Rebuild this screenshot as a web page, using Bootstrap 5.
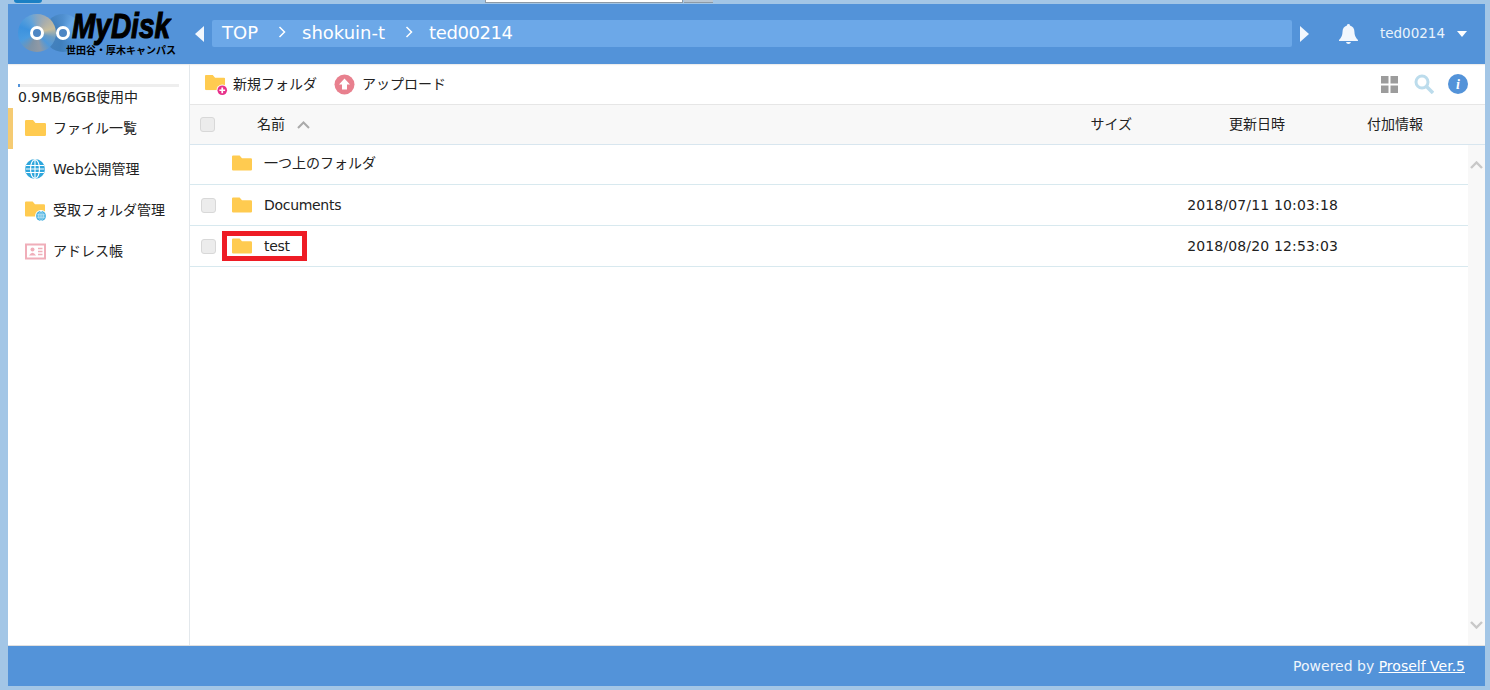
<!DOCTYPE html>
<html lang="ja">
<head>
<meta charset="utf-8">
<title>MyDisk</title>
<link href="https://cdn.jsdelivr.net/npm/bootstrap@5.3.0/dist/css/bootstrap.min.css" rel="stylesheet">
<style>
html,body{height:100%;overflow:hidden}
body{background:#a3c6e6;font-family:"DejaVu Sans","Noto Sans CJK JP",sans-serif;font-size:14px;color:#222;letter-spacing:0}
.strip{height:4px;position:relative;flex:none}
.strip i{display:block;position:absolute;top:0;height:3px}
.st-a{left:14px;width:28px;background:#1b80c4;border-radius:0 0 5px 5px}
.st-b{left:485px;width:198px;background:#fff;border:solid #8e9aa5;border-width:0 1px 1px}
.st-c{left:684px;width:29px;background:#b9c6d3;border-bottom:1px solid #8e9aa5}
.win{margin:0 5px 0 8px;height:682px;background:#fff}
.topbar{height:60px;background:#5393d9;padding:0;flex:none;flex-wrap:nowrap}
.logo-box{width:176px;height:60px;position:relative;flex:none}
.disc{position:absolute;top:10px;width:38px;height:38px;border-radius:50%}
.disc::after{content:"";position:absolute;left:12px;top:12px;width:14px;height:14px;border-radius:50%;background:#4d86c4;border:3px solid #fff}
.disc-b{left:36px;background:conic-gradient(#4f8fcf 0deg,#68a8e6 40deg,#5a9de0 90deg,#4c8fd4 130deg,#3f7fbc 190deg,#4682bd 240deg,#3f7db8 300deg,#4f8fcf 360deg)}
.disc-a{left:10px;background:conic-gradient(#86a6c2 0deg,#a8adad 35deg,#c6bd9e 75deg,#6b9cc4 105deg,#4f98da 135deg,#8f99a5 170deg,#7e93a6 205deg,#4a9be0 245deg,#3c92de 290deg,#62a3da 335deg,#86a6c2 360deg)}
.logo-main{position:absolute;left:64px;top:6px;font:italic 900 35px/32px "Liberation Sans",sans-serif;color:#000;-webkit-text-stroke:1.2px #000;white-space:nowrap;transform:scaleX(.8);transform-origin:left center}
.logo-sub{position:absolute;left:58px;top:39px;font:700 10px/14px "Noto Sans CJK JP",sans-serif;color:#000;white-space:nowrap}
.crumb-wrap{flex:1 1 auto;min-width:0;margin:0 0 1px 11px}
.crumbs{height:27px;background:#6ca8e8;border-radius:2px;color:#fff;font-size:18px;flex:none;padding:0 0 3px 10px;margin:0 8px;width:1080px}
.crumbs .sep{margin:0 16px 0 20px;width:8px;height:12px}
.crumb-end{letter-spacing:-.4px}
.user{color:#eaf3fc;font-size:13.5px}
.bell{margin:0 22px 0 30px}
.caret-d{width:0;height:0;border:5px solid transparent;border-top:6px solid #fff;border-bottom:0;margin:1px 18px 0 12px}
.mainarea{flex:1 1 auto;min-height:0}
.side{width:182px;flex:none;border-right:1px solid #e3e8ec;padding-top:20px;box-shadow:inset 0 2px 2px -2px #bbb}
.meter{height:3px;margin:0 10px;background:#eee;flex:none}
.meter b{display:block;height:3px;background:#5393d9}
.usage{margin:1px 10px 0;font-size:14px;line-height:18px;height:20px;white-space:nowrap}
.side-link{height:41px;padding:0 0 0 11px;color:#222;font-size:14px;gap:6px;border-left:5px solid transparent;border-radius:0;white-space:nowrap}
.side-link.on{border-left-color:#f5cb73}
.side-ico{width:23px;height:23px;flex:none}
.content{flex:1 1 auto;min-width:0}
.tools{height:41px;flex:none;padding:0 17px 0 15px;border-bottom:1px solid #e6e6e6;box-shadow:inset 0 2px 2px -2px #bbb}
.tool{color:#222;gap:5px;font-size:14px;padding:0;margin-right:17px;border:0}
.tool-ends{gap:14px}
.tool-grid{margin-right:2px}
.head{height:40px;background:#f8f8f8;border-bottom:1px solid #d8e6ef;flex:none}
.cb{width:15px;height:15px;background:#ececec;border:1px solid #d8d8d8;border-radius:3px;flex:none;margin:0}
.c-cb{width:42px;padding-left:11px;flex:none}
.c-name{flex:1 1 auto;min-width:0;gap:12px}
.c-date{width:205px;text-align:right;flex:none;letter-spacing:.15px}
.c-info{width:130px;flex:none}
.head .c-cb{width:67px;padding-left:10px}
.h-date{width:153px;text-align:right;margin-right:82px;flex:none}
.h-info{width:118px;flex:none}
.listwrap{flex:1 1 auto;min-height:0}
.rows{flex:1 1 auto;min-width:0}
.frow{height:41px;border-bottom:1px solid #d8e9ef;flex:none}
.frow:first-child{height:40px;padding-bottom:2px}
.fname{letter-spacing:-.3px}
.fold{margin-top:-1px}
.scroller{width:17px;background:#f8f8f8;flex:none;padding:16px 0}
.foot{height:41px;background:#5393d9;color:#eef5fc;font-size:14px;flex:none;padding-right:20px;border-top:1px solid #e0e0e0}
.foot a{color:#fff}
.redbox{border:5px solid #ee1c25;position:absolute;left:-10px;top:-5px;width:85px;height:30px;pointer-events:none}
.namecell{position:relative}
</style>
</head>
<body class="d-flex flex-column">
<svg width="0" height="0" class="position-absolute">
  <defs>
    <symbol id="folder" viewBox="0 0 21 16"><path d="M0 1.2Q0 0 1.2 0H8l2.5 3H19.8Q21 3 21 4.2V14.8Q21 16 19.8 16H1.2Q0 16 0 14.8Z" fill="#ffcb50"/></symbol>
    <symbol id="globe" viewBox="0 0 20 20"><circle cx="10" cy="10" r="10" fill="#2ea6dc"/><g fill="none" stroke="#fff" stroke-width="1.1"><ellipse cx="10" cy="10" rx="4.5" ry="9.4"/><path d="M10 .5V19.5M1 6.5H19M.5 10H19.5M1 13.5H19"/></g></symbol>
  </defs>
</svg>
<div class="strip"><i class="st-a"></i><i class="st-b"></i><i class="st-c"></i></div>
<div class="win d-flex flex-column">
  <nav class="navbar topbar align-items-center">
    <div class="logo-box">
      <div class="disc disc-b"></div>
      <div class="disc disc-a"></div>
      <span class="logo-main">MyDisk</span>
      <span class="logo-sub">世田谷・厚木キャンパス</span>
    </div>
    <div class="crumb-wrap d-flex align-items-center">
      <svg width="9" height="16" viewBox="0 0 9 16"><path d="M9 0V16L0 8Z" fill="#f2f7fd"/></svg>
      <div class="crumbs d-flex align-items-center">
        <span>TOP</span>
        <svg class="sep" viewBox="0 0 8 12"><path d="M1.5 1L6.5 6L1.5 11" fill="none" stroke="#fff" stroke-width="1.5"/></svg>
        <span>shokuin-t</span>
        <svg class="sep" viewBox="0 0 8 12"><path d="M1.5 1L6.5 6L1.5 11" fill="none" stroke="#fff" stroke-width="1.5"/></svg>
        <span class="crumb-end">ted00214</span>
      </div>
      <svg width="9" height="16" viewBox="0 0 9 16"><path d="M0 0V16L9 8Z" fill="#f2f7fd"/></svg>
      <svg class="bell" width="19" height="20" viewBox="0 0 19 20"><path d="M9.5 0Q11 0 11 1.5Q15.500 3 15.500 8Q15.500 13 19 16V17H0V16Q3.500 13 3.500 8Q3.500 3 8 1.500Q8 0 9.500 0ZM7 18H12Q11.500 20 9.500 20Q7.500 20 7 18Z" fill="#f2f7fd"/></svg>
      <span class="user">ted00214</span>
      <span class="caret-d"></span>
    </div>
  </nav>
  <div class="mainarea d-flex">
    <aside class="side d-flex flex-column">
      <div class="meter"><b style="width:1%"></b></div>
      <div class="usage">0.9MB/6GB使用中</div>
      <div class="nav flex-column">
        <a class="nav-link side-link on d-flex align-items-center" href="#"><svg class="side-ico" viewBox="0 0 23 23"><use href="#folder" x="1" y="3" width="21" height="16"/></svg>ファイル一覧</a>
        <a class="nav-link side-link d-flex align-items-center" href="#"><svg class="side-ico" viewBox="0 0 23 23"><use href="#globe" x="1" y="1" width="20" height="20"/></svg>Web公開管理</a>
        <a class="nav-link side-link d-flex align-items-center" href="#"><svg class="side-ico" viewBox="0 0 23 23"><use href="#folder" x="1" y="2" width="20" height="16"/><circle cx="17" cy="17" r="6" fill="#fff"/><use href="#globe" x="12" y="12" width="10" height="10"/></svg>受取フォルダ管理</a>
        <a class="nav-link side-link d-flex align-items-center" href="#"><svg class="side-ico" viewBox="0 0 23 23"><rect x="2" y="4.500" width="19" height="14" fill="#fff" stroke="#f0aeb9" stroke-width="2"/><circle cx="8.500" cy="9.500" r="2" fill="#f0aeb9"/><path d="M5 15.500Q8.500 10 12 15.500Z" fill="#f0aeb9"/><path d="M14 8.500H18.500M14 11.500H18.500M14 14.500H18.500" stroke="#f0aeb9" stroke-width="1.300"/></svg>アドレス帳</a>
      </div>
    </aside>
    <section class="content d-flex flex-column">
      <div class="tools d-flex align-items-center">
        <button class="btn tool d-flex align-items-center" type="button"><svg width="23" height="23" viewBox="0 0 24 24"><use href="#folder" x="0" y="2" width="21" height="16"/><circle cx="18" cy="18" r="6" fill="#fff"/><circle cx="18" cy="18" r="5" fill="#e8308a"/><path d="M15 18H21M18 15V21" stroke="#fff" stroke-width="1.800"/></svg>新規フォルダ</button>
        <button class="btn tool d-flex align-items-center" type="button"><svg width="23" height="23" viewBox="0 0 23 23"><circle cx="10.500" cy="11.500" r="10" fill="#e8808e"/><path d="M10.500 5.500L16 11.500H13V16.500H8V11.500H5Z" fill="#fff"/></svg>アップロード</button>
        <div class="ms-auto d-flex align-items-center tool-ends">
          <svg class="tool-grid" width="17" height="17" viewBox="0 0 17 17" fill="#9c9c9c"><rect width="7.500" height="7.500"/><rect x="9.500" width="7.500" height="7.500"/><rect y="9.500" width="7.500" height="7.500"/><rect x="9.500" y="9.500" width="7.500" height="7.500"/></svg>
          <svg width="20" height="20" viewBox="0 0 20 20" fill="none" stroke="#bcdcec"><circle cx="8" cy="8" r="6" stroke-width="3"/><path d="M12.500 12.500L19 19" stroke-width="3.500"/></svg>
          <svg width="20" height="20" viewBox="0 0 20 20"><circle cx="10" cy="10" r="10" fill="#5393d9"/><text x="10" y="15" text-anchor="middle" font-family="Liberation Serif" font-style="italic" font-weight="700" font-size="14" fill="#fff">i</text></svg>
        </div>
      </div>
      <div class="head d-flex align-items-center">
        <div class="c-cb"><div class="cb"></div></div>
        <div class="c-name d-flex align-items-center"><span>名前</span><svg width="13" height="8" viewBox="0 0 13 8"><path d="M1 7L6.500 1.500L12 7" fill="none" stroke="#aaa" stroke-width="2"/></svg></div>
        <div>サイズ</div>
        <div class="h-date">更新日時</div>
        <div class="h-info">付加情報</div>
      </div>
      <div class="listwrap d-flex">
        <div class="rows d-flex flex-column">
          <div class="frow d-flex align-items-center">
            <div class="c-cb"></div>
            <div class="c-name d-flex align-items-center"><svg class="fold" width="20" height="16"><use href="#folder"/></svg>一つ上のフォルダ</div>
          </div>
          <div class="frow d-flex align-items-center">
            <div class="c-cb"><div class="cb"></div></div>
            <div class="c-name d-flex align-items-center"><svg class="fold" width="20" height="16"><use href="#folder"/></svg><span class="fname">Documents</span></div>
            <div class="c-date">2018/07/11 10:03:18</div>
            <div class="c-info"></div>
          </div>
          <div class="frow d-flex align-items-center">
            <div class="c-cb"><div class="cb"></div></div>
            <div class="c-name namecell d-flex align-items-center"><svg class="fold" width="20" height="16"><use href="#folder"/></svg><span class="fname">test</span><span class="redbox"></span></div>
            <div class="c-date">2018/08/20 12:53:03</div>
            <div class="c-info"></div>
          </div>
        </div>
        <div class="scroller d-flex flex-column justify-content-between align-items-center">
          <svg width="13" height="8" viewBox="0 0 13 8"><path d="M1 7L6.500 1.500L12 7" fill="none" stroke="#c8c8c8" stroke-width="2.400"/></svg>
          <svg width="13" height="8" viewBox="0 0 13 8"><path d="M1 1L6.500 6.500L12 1" fill="none" stroke="#c8c8c8" stroke-width="2.400"/></svg>
        </div>
      </div>
    </section>
  </div>
  <footer class="foot d-flex align-items-center justify-content-end">Powered by&nbsp;<a href="#">Proself Ver.5</a></footer>
</div>
</body>
</html>
